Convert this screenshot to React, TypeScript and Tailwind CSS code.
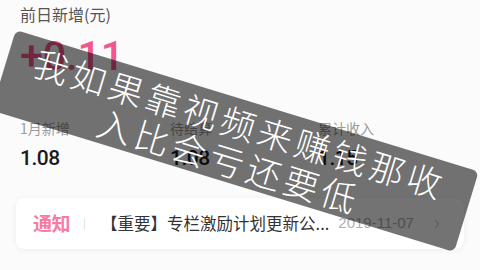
import { ChevronRight } from 'lucide-react';

const cjk = { fontFamily: '"Noto Sans CJK SC", "Noto Sans", sans-serif' };
const num = { fontFamily: 'Roboto, "Noto Sans CJK SC", sans-serif' };

interface StatProps {
  label: string;
  value: string;
}

function Stat({ label, value }: StatProps) {
  return (
    <div className="flex flex-col">
      <span className="text-[14px] leading-[18px] text-[#9a9a9a]">{label}</span>
      <span className="mt-[9px] text-[21px] leading-[24px] font-medium text-[#1a1a1a] tracking-tight" style={num}>
        {value}
      </span>
    </div>
  );
}

export default function App() {
  return (
    <div className="relative w-[480px] h-[270px] overflow-hidden bg-[#fbfbfb]" style={cjk}>
      {/* Earnings header */}
      <div className="px-5 pt-[3px]">
        <p className="text-[16px] leading-[22px] text-[#555]">前日新增(元)</p>
        <p className="mt-[9px] text-[41px] leading-[44px] font-medium text-[#f4578c]" style={num}>
          +0.11
        </p>
      </div>

      {/* Stats row */}
      <div className="grid grid-cols-[150px_148px_1fr] px-5 mt-[41px]">
        <Stat label="1月新增" value="1.08" />
        <Stat label="待结算" value="1.08" />
        <Stat label="累计收入" value="1.15" />
      </div>

      {/* Notice card */}
      <div className="mx-4 mt-[28px] h-[51px] rounded-lg bg-white shadow-[0_1px_6px_rgba(0,0,0,0.06)] flex items-center pl-[17px] pr-[20px]">
        <span className="text-[19px] font-bold text-[#f77aa1] tracking-tight">通知</span>
        <span className="ml-[14px] mr-[16px] w-px h-[12px] bg-[#e3e3e3]" />
        <span className="text-[16.5px] text-[#333] whitespace-nowrap">【重要】专栏激励计划更新公...</span>
        <span className="ml-[9px] text-[15px] text-[#b0b0b0]" style={{ fontFamily: '"Liberation Sans", sans-serif' }}>
          2019-11-07
        </span>
        <ChevronRight className="ml-auto w-[14px] h-[14px] text-[#aaa]" strokeWidth={1.5} />
      </div>

      {/* Overlay caption */}
      <div className="absolute left-[-7px] top-[99px] w-[484px] h-[84px] rotate-[17deg] rounded-md bg-black/55 flex flex-col items-center justify-center">
        <p className="text-[35px] leading-[39px] font-light tracking-[4px] text-white whitespace-nowrap">我如果靠视频来赚钱那收</p>
        <p className="text-[35px] leading-[39px] font-light tracking-[4px] text-white whitespace-nowrap">入比会亏还要低</p>
      </div>
    </div>
  );
}
